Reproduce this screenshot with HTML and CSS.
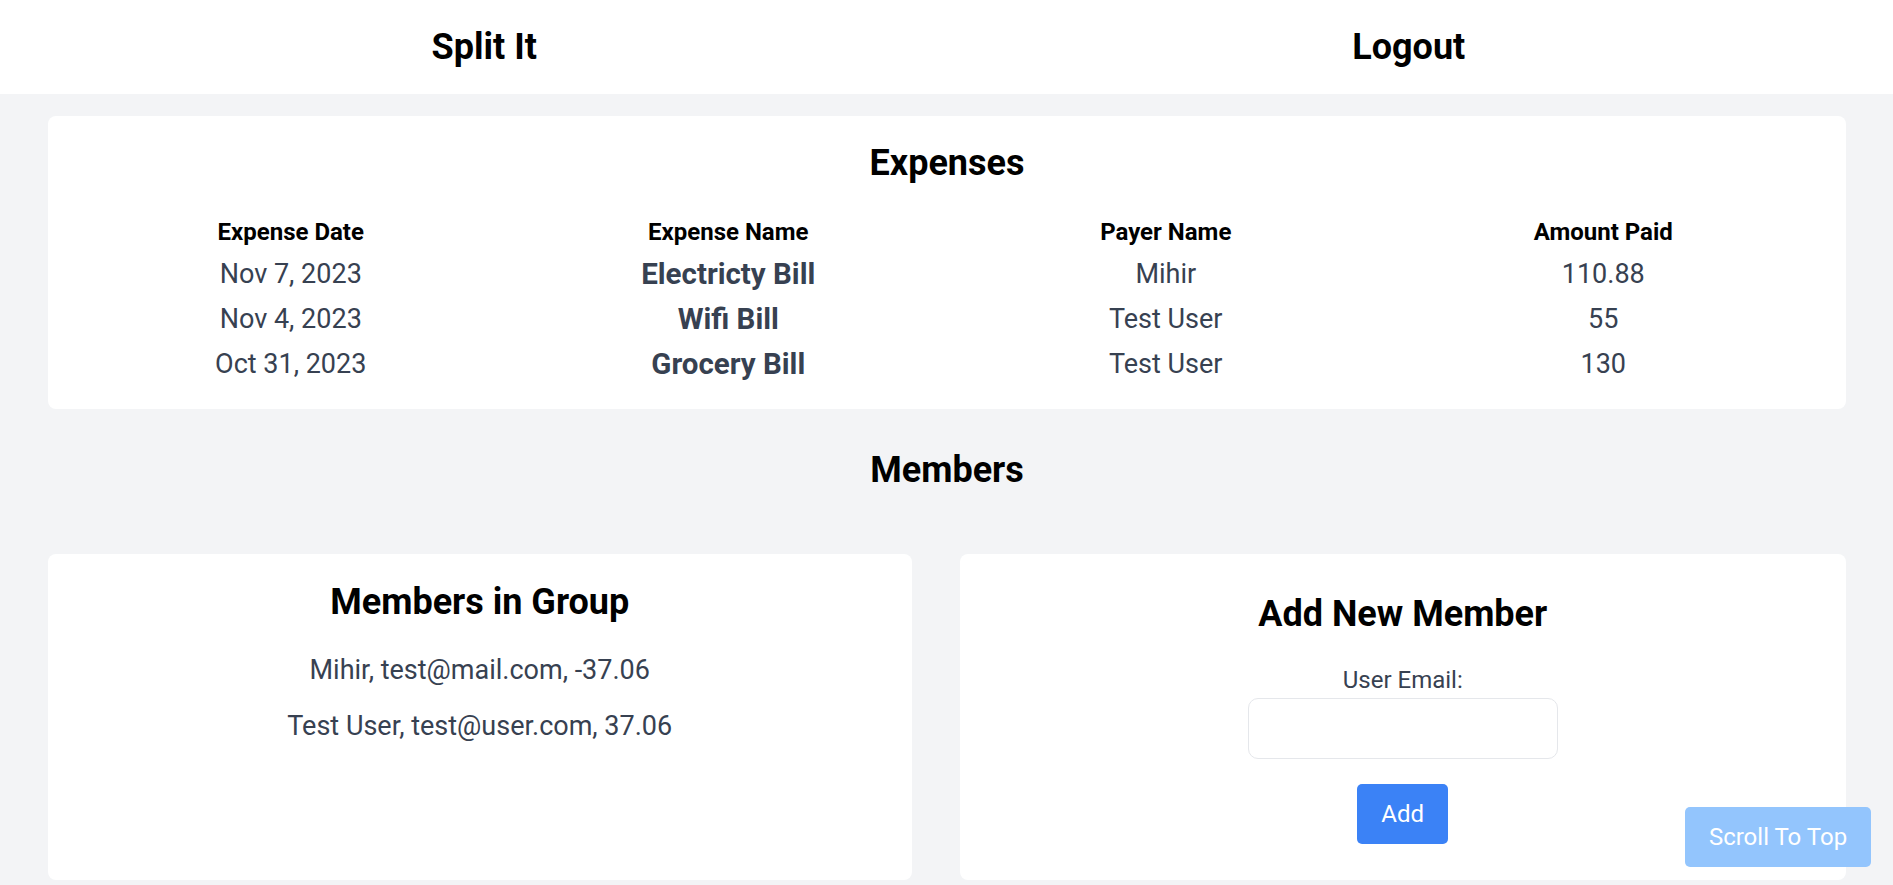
FILE: index.html
```html
<!DOCTYPE html>
<html lang="en">
<head>
<meta charset="utf-8">
<title>Split It</title>
<link rel="stylesheet" href="styles.css">
</head>
<body>
<header class="topbar">
  <div class="topbar-item"><span class="brand">Split It</span></div>
  <div class="topbar-item"><a class="logout">Logout</a></div>
</header>
<main class="page">
  <section class="card expenses">
    <h2 class="title">Expenses</h2>
    <div class="table">
      <div class="row head">
        <div>Expense Date</div><div>Expense Name</div><div>Payer Name</div><div>Amount Paid</div>
      </div>
      <div class="row">
        <div>Nov 7, 2023</div><div class="name">Electricty Bill</div><div>Mihir</div><div>110.88</div>
      </div>
      <div class="row">
        <div>Nov 4, 2023</div><div class="name">Wifi Bill</div><div>Test User</div><div>55</div>
      </div>
      <div class="row">
        <div>Oct 31, 2023</div><div class="name">Grocery Bill</div><div>Test User</div><div>130</div>
      </div>
    </div>
  </section>
  <h2 class="section-title">Members</h2>
  <div class="members-grid">
    <section class="card members">
      <h2 class="title">Members in Group</h2>
      <p class="member">Mihir, test@mail.com, -37.06</p>
      <p class="member">Test User, test@user.com, 37.06</p>
    </section>
    <section class="card add-member">
      <h2 class="title">Add New Member</h2>
      <form class="add-form">
        <label class="label" for="email">User Email:</label>
        <input class="input" id="email" type="email">
        <button class="btn" type="button">Add</button>
      </form>
    </section>
  </div>
</main>
<button class="scroll-top" type="button">Scroll To Top</button>
</body>
</html>
```
FILE: styles.css
```css
* { box-sizing: border-box; }
html, body { margin: 0; padding: 0; }
body {
  font-family: Roboto, "Liberation Sans", Arial, sans-serif;
  background: #f3f4f6;
  color: #374151;
  height: 885px;
  overflow: hidden;
}
.topbar {
  background: #fff;
  display: flex;
  padding: 27px 22px;
  height: 94px;
}
.topbar-item {
  flex: 1;
  text-align: center;
  font-size: 36px;
  line-height: 40px;
  font-weight: 700;
  color: #000;
}
.logout { cursor: pointer; }
.page {
  padding: 22px 47px 0 48px;
}
.card {
  background: #fff;
  border-radius: 8px;
}
.expenses {
  padding: 27px 24px 22px;
}
.title {
  margin: 0;
  font-size: 36px;
  line-height: 40px;
  font-weight: 700;
  color: #000;
  text-align: center;
}
.expenses .title { margin-bottom: 30px; }
.row {
  display: grid;
  grid-template-columns: repeat(4, 1fr);
  text-align: center;
  font-size: 27px;
  line-height: 45px;
  color: #374151;
}
.row.head {
  font-size: 24px;
  line-height: 39px;
  font-weight: 700;
  color: #000;
}
.name { font-weight: 700; font-size: 29.5px; }
.section-title {
  margin: 41px 0 64px;
  font-size: 36px;
  line-height: 40px;
  font-weight: 700;
  color: #000;
  text-align: center;
}
.members-grid {
  display: grid;
  grid-template-columns: 864fr 887fr;
  gap: 48px;
}
.members, .add-member { height: 326px; text-align: center; }
.members { padding-top: 28px; }
.members .title { margin-bottom: 30px; }
.member {
  margin: 20px 0 0;
  font-size: 27px;
  line-height: 36px;
}
.add-member { padding-top: 40px; }
.add-form {
  display: flex;
  flex-direction: column;
  align-items: center;
  margin-top: 32px;
}
.label {
  font-size: 24px;
  line-height: 28px;
  color: #374151;
}
.input {
  margin-top: 4px;
  width: 310px;
  height: 61px;
  border: 1px solid #e5e7eb;
  border-radius: 10px;
  background: #fff;
  font-size: 22px;
  outline: none;
}
.btn {
  margin-top: 25px;
  width: 91px;
  height: 60px;
  border: 0;
  border-radius: 5px;
  background: #3b82f6;
  color: #fff;
  font-family: inherit;
  font-size: 24px;
}
.scroll-top {
  position: fixed;
  right: 22px;
  bottom: 18px;
  width: 186px;
  height: 60px;
  border: 0;
  border-radius: 5px;
  background: #93c5fd;
  color: #fff;
  font-family: inherit;
  font-size: 24px;
}
```
